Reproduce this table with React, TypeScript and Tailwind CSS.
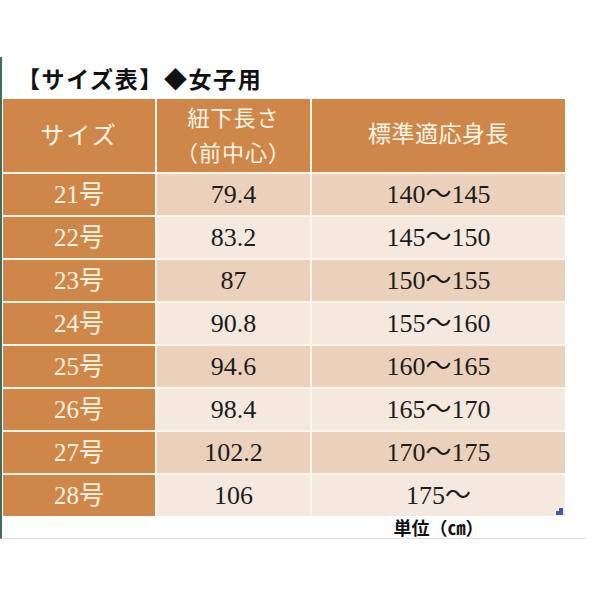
const serif = { fontFamily: '"Liberation Serif", "Noto Sans CJK JP", serif' }
const gothic = { fontFamily: '"Noto Sans CJK JP", "Noto Sans", sans-serif' }

const rows = [
  { size: '21号', length: '79.4', height: '140～145' },
  { size: '22号', length: '83.2', height: '145～150' },
  { size: '23号', length: '87', height: '150～155' },
  { size: '24号', length: '90.8', height: '155～160' },
  { size: '25号', length: '94.6', height: '160～165' },
  { size: '26号', length: '98.4', height: '165～170' },
  { size: '27号', length: '102.2', height: '170～175' },
  { size: '28号', length: '106', height: '175～' },
]

export default function App() {
  return (
    <div className="w-[600px] h-[600px] bg-white pt-[57px]">
      <div className="w-[586px] border-l-2 border-l-[#3f6e5c] border-b border-b-[#dedede] pl-px">
        {/* Title */}
        <div className="h-[42px] flex items-center pl-[14px]">
          <h1 className="text-[23px] font-bold tracking-[1.6px] text-[#111] leading-none" style={gothic}>
            【サイズ表】◆女子用
          </h1>
        </div>

        {/* Table */}
        <div className="relative w-[562px]">
          <div
            className="grid grid-cols-[152px_153px_253px] grid-rows-[73px_repeat(8,41px)] gap-[2px] bg-[#fdf5e8]"
            style={serif}
          >
            <div className="bg-[#cf8649] flex items-center justify-center text-[24px] tracking-[2px] text-[#fff6e8]">
              サイズ
            </div>
            <div className="bg-[#cf8649] flex flex-col items-center justify-center text-[22px] leading-[35px] tracking-[1px] text-[#fff6e8]">
              <span>紐下長さ</span>
              <span>（前中心）</span>
            </div>
            <div className="bg-[#cf8649] flex items-center justify-center text-[23px] tracking-[0.5px] text-[#fff6e8]">
              標準適応身長
            </div>

            {rows.map((r, i) => {
              const shade = i % 2 === 0 ? 'bg-[#ebd1bc]' : 'bg-[#f5e8de]'
              return [
                <div key={r.size} className="bg-[#cf8649] flex items-center justify-center text-[25px] text-[#fff4e2]">
                  {r.size}
                </div>,
                <div key={r.size + 'l'} className={`${shade} flex items-center justify-center text-[26px] text-[#1c1c1c]`}>
                  {r.length}
                </div>,
                <div key={r.size + 'h'} className={`${shade} flex items-center justify-center text-[26px] text-[#1c1c1c]`}>
                  {r.height}
                </div>,
              ]
            })}
          </div>

          {/* resize handle */}
          <svg className="absolute right-[2px] bottom-[1px]" width="7" height="7" viewBox="0 0 7 7">
            <polygon points="3,0 7,0 7,7 0,7 0,3 3,3" fill="#3d5aa6" />
          </svg>
        </div>

        {/* Unit */}
        <div className="w-[562px] h-[22px] grid grid-cols-[309px_253px]">
          <div />
          <div className="flex items-center justify-center text-[18px] font-bold leading-none text-[#111]" style={gothic}>
            単位（㎝）
          </div>
        </div>
      </div>
    </div>
  )
}
